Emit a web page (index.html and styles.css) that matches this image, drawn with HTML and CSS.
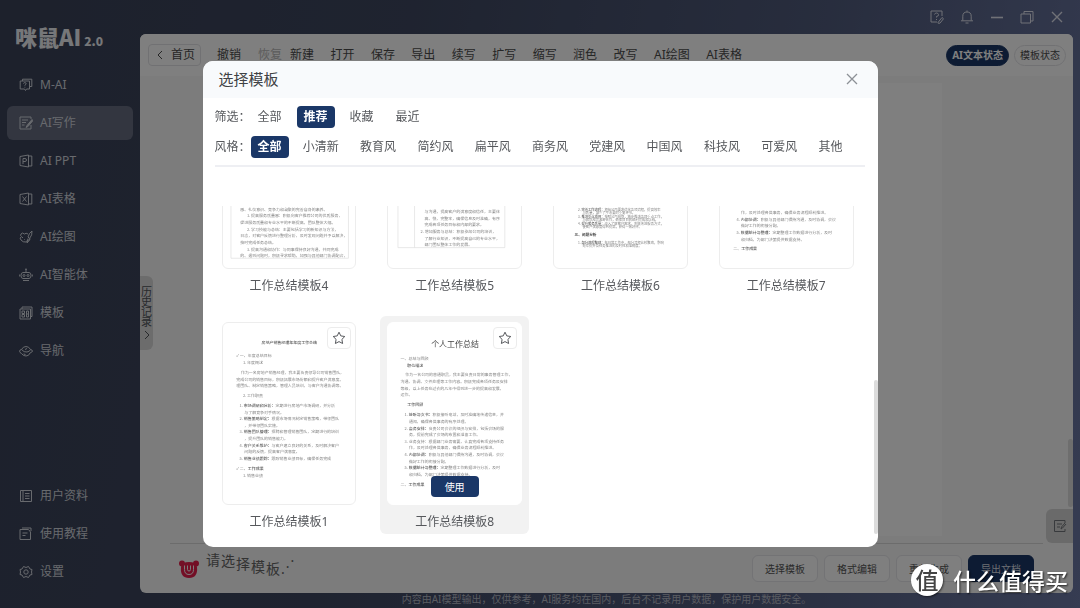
FILE: index.html
```html
<!DOCTYPE html>
<html lang="zh-CN">
<head>
<meta charset="utf-8">
<title>咪鼠AI 2.0</title>
<link rel="stylesheet" href="styles.css">
</head>
<body>
<div class="app">
  <aside class="sidebar">
    <div class="logo">咪鼠AI<span class="logo-version">2.0</span></div>
    <nav class="nav">
      <a class="nav-item" href="#"><svg class="icon" viewBox="0 0 14 14"><path d="M3.5 3V1.2h9.3v7.3H11M1.2 3h9.3v8H7.5L6.500 12.500 5.500 11H1.200zM4.500 5.600q.2-1 1.300-1 1.400 0 1.300 1.100-.2.900-1.200 1.300v.6M5.900 8.800v.8"/></svg>M-AI</a>
      <a class="nav-item active" href="#"><svg class="icon" viewBox="0 0 14 14"><path d="M12 3V1H1v12h11V9M3 4h6M3 6.500h4M3 9h2.500"/><path d="M13 3.500 8 9.500l-1 2 2-1 5-6z" fill="currentColor"/></svg>AI写作</a>
      <a class="nav-item" href="#"><svg class="icon" viewBox="0 0 14 14"><path d="M1 2.500 9.500 1v12L1 11.500zM9.500 2h3.300v10H9.500M4 10V4.500h2q1.500 0 1.500 1.500T6 7.500H4"/></svg>AI PPT</a>
      <a class="nav-item" href="#"><svg class="icon" viewBox="0 0 14 14"><path d="M1 2.500 9.500 1v12L1 11.500zM9.500 2h3.300v10H9.500M3.500 4.500l4 5M7.500 4.500l-4 5"/></svg>AI表格</a>
      <a class="nav-item" href="#"><svg class="icon" viewBox="0 0 14 14"><path d="M9 4Q7 2.500 5.500 4 3 2 2 4t.5 2.500Q0 8 2 10q2 2.500 5 2 1 0 1-1.500 3 0 3-2.500M13 1q.5 4-2.500 7.500L9 7q1-4 4-6zM9 8.500 8 13l3-3.500M3.500 7v1M5.500 9v.6"/></svg>AI绘图</a>
      <a class="nav-item" href="#"><svg class="icon" viewBox="0 0 14 14"><path d="M7 1v3M4 4.500h6q2 0 2 3t-2 3H4q-2 0-2-3t2-3zM.7 6.500v2M13.300 6.500v2M4 12.500h6M6 1.200h2"/><circle cx="5" cy="7.500" r="1"/><circle cx="9" cy="7.500" r="1"/></svg>AI智能体</a>
      <a class="nav-item" href="#"><svg class="icon" viewBox="0 0 14 14"><path d="M3 3V1h10v9.500h-1.500M1 3h10.500v10H1zM3 5h2.500v2.500H3zM3 8.500h2.500V11H3zM7.500 5h2v6h-2zM7.500 8h2"/></svg>模板</a>
      <a class="nav-item" href="#"><svg class="icon" viewBox="0 0 14 14"><path d="M2.500 5.500Q4 2.500 7 2.500t4.500 3q2 .5 2 1.500t-2.500 2Q10 12 7 12T2.500 9.500Q.5 8.500.5 7.200T2.500 5.500q2.500 3 5.500 2.500t3.500-2.500M6 5.500l2-1M4.500 10l2 .5"/></svg>导航</a>
    </nav>
    <nav class="nav nav-bottom">
      <a class="nav-item" href="#"><svg class="icon" viewBox="0 0 14 14"><path d="M1.500 1.500h11v11h-11zM4 1.500v11M6 4.500h4.500M6 7h4.500M6 9.500h4.500"/></svg>用户资料</a>
      <a class="nav-item" href="#"><svg class="icon" viewBox="0 0 14 14"><path d="M1 2.500h8.500L11.500 5v7.500H1zM3 1h9v3M3.500 6h5M3.500 8.500h3"/></svg>使用教程</a>
      <a class="nav-item" href="#"><svg class="icon" viewBox="0 0 14 14"><path d="M4.500 1.500 7 2.500l2.500-1L11 4l2 .5-.5 2.500.5 2.500-2 .5-1.500 2.500-2.500-1-2.500 1L3 10l-2-.5L1.500 7 1 4.500 3 4z"/><circle cx="7" cy="7" r="2.200"/></svg>设置</a>
    </nav>
  </aside>

  <div class="content">
    <header class="titlebar">
      <button class="win-btn" aria-label="反馈"><svg class="icon" viewBox="0 0 14 14"><path d="M12 6V1H1v11h6M4.500 4.500Q5 3 6.500 3T8.500 4.500 6.500 6.500v1M6.500 9v1M8 12.500l4-5 1.500 1.200-3.500 4.500H8z"/></svg></button>
      <button class="win-btn" aria-label="通知"><svg class="icon" viewBox="0 0 14 14"><path d="M7 .5v1.300M2.800 10.500V6.200q0-4.200 4.200-4.200t4.200 4.200v4.300M1 10.800h12M5.500 13h3"/></svg></button>
      <button class="win-btn" aria-label="最小化"><svg class="icon" viewBox="0 0 14 14"><path d="M1 7.500h12" stroke-width="1.600"/></svg></button>
      <button class="win-btn" aria-label="还原"><svg class="icon" viewBox="0 0 14 14"><path d="M4 4V1.500h9V11h-2.500M1 4h9.500v9H1z"/></svg></button>
      <button class="win-btn" aria-label="关闭"><svg class="icon" viewBox="0 0 14 14"><path d="m2 2 10 10M12 2 2 12" stroke-width="1.400"/></svg></button>
    </header>

    <main class="panel">
      <div class="toolbar">
        <button class="home"><svg class="chevron" viewBox="0 0 6 10"><path d="M5 1 1 5l4 4"/></svg>首页</button>
        <div class="history-tools">
          <button class="tool">撤销</button>
          <button class="tool" disabled>恢复</button>
        </div>
        <div class="tools">
          <button class="tool">新建</button><button class="tool">打开</button><button class="tool">保存</button><button class="tool">导出</button><button class="tool">续写</button><button class="tool">扩写</button><button class="tool">缩写</button><button class="tool">润色</button><button class="tool">改写</button><button class="tool">AI绘图</button><button class="tool">AI表格</button>
        </div>
        <div class="modes">
          <button class="mode selected">AI文本状态</button>
          <button class="mode">模板状态</button>
        </div>
      </div>
      <div class="editor">
        <div class="page"></div>
        <button class="history-tab"><span>历史记录</span><svg class="chevron" viewBox="0 0 6 10"><path d="m1 1 4 4-4 4"/></svg></button>
        <div class="editor-scroll"></div>
        <button class="note-tab" aria-label="笔记"><svg class="icon" viewBox="0 0 14 14"><path d="M12 4V1.500H1.500v11H12V10M4 5h5M4 8h3M13 5 9.500 9 8 10l.5-2L12 4"/></svg></button>
      </div>
      <div class="actionbar">
        <svg class="mascot" viewBox="0 0 20 18"><circle cx="3" cy="3.500" r="3"/><circle cx="17" cy="3.500" r="3"/><path d="M2 7q1-5 8-5t8 5q1 11-8 11T2 7z"/><path class="mascot-line" d="M5.500 5.500v4q0 5 4.500 5t4.500-5v-4M8.500 5.500V9.500q0 1.500 1.500 1.500t1.500-1.500V5.500"/></svg>
        <div class="wave"><span>请</span><span>选</span><span>择</span><span>模</span><span>板</span><i>.</i><i>.</i><i>.</i></div>
        <div class="actions">
          <button class="action">选择模板</button>
          <button class="action">格式编辑</button>
          <button class="action">重新生成</button>
          <button class="action primary">导出文档</button>
        </div>
      </div>
    </main>
    <footer class="disclaimer">内容由AI模型输出，仅供参考，AI服务均在国内，后台不记录用户数据，保护用户数据安全。</footer>
  </div>
</div>

<div class="overlay">
  <section class="modal" role="dialog" aria-modal="true" aria-labelledby="modal-title">
    <header class="modal-head">
      <h2 id="modal-title">选择模板</h2>
      <button class="close" aria-label="关闭"><svg class="icon" viewBox="0 0 14 14"><path d="m2 2 10 10M12 2 2 12" stroke-width="1.300"/></svg></button>
    </header>
    <div class="modal-body">
      <div class="filters">
        <div class="filter-row"><span class="filter-label">筛选：</span>
          <div class="chips"><button class="chip">全部</button><button class="chip selected">推荐</button><button class="chip">收藏</button><button class="chip">最近</button></div>
        </div>
        <div class="filter-row"><span class="filter-label">风格：</span>
          <div class="chips spread"><button class="chip selected">全部</button><button class="chip">小清新</button><button class="chip">教育风</button><button class="chip">简约风</button><button class="chip">扁平风</button><button class="chip">商务风</button><button class="chip">党建风</button><button class="chip">中国风</button><button class="chip">科技风</button><button class="chip">可爱风</button><button class="chip">其他</button></div>
        </div>
      </div>
      <div class="viewport">
        <div class="grid">
          <article class="item"><div class="card">
            <svg class="doc" viewBox="0 0 400 546">
              <path class="frame" d="M24 20V516H378V20"/>
              <g>
                <text x="52" y="373">感、礼仪意识、竞争力和凝聚的完善自身的素养。</text>
                <text x="72" y="393">1. 提高服务质量感：积极向客户推荐公司的优质服务，</text>
                <text x="52" y="413">促进服务质量和专业水平的不断提高，团队整体大幅。</text>
                <text x="72" y="433">2. 学习技能与总结：主要包括学习的新知识与方法，</text>
                <text x="52" y="453">日志，对客户反馈进行整理分析，及时发现问题并予以解决，</text>
                <text x="52" y="473">按时完成任务总结。</text>
                <text x="72" y="493">3. 提高沟通和协作：与同事保持良好沟通，共同完成</text>
                <text x="52" y="511">的、遇到问题时，积极寻求帮助，加强与其他部门协调配合，</text>
              </g>
            </svg></div><h3>工作总结模板4</h3></article>
          <article class="item"><div class="card">
            <svg class="doc" viewBox="0 0 400 546">
              <path class="frame" d="M30 20V484H352V20M80 20V484"/>
              <g>
                <text x="110" y="380">与沟通，提高客户的满意度和信任，主要体</text>
                <text x="110" y="400">高、快、完整率，确保信息及时准确，有序</text>
                <text x="110" y="420">完成各项任务目标和内部的要求。</text>
                <text x="98" y="440">2. 增加服务与总结：积极参加公司的培训，</text>
                <text x="110" y="460">了解行业知识，不断提高自己的专业水平，</text>
                <text x="110" y="480">部门团队整体工作的发展。</text>
              </g>
            </svg></div><h3>工作总结模板5</h3></article>
          <article class="item"><div class="card">
            <svg class="doc small" viewBox="0 0 400 546">
              <g>
                <text x="72" y="374">2. <tspan class="b">完善工作流程：</tspan>根据公司要求优化各项流程，提高效率</text>
                <text x="86" y="384">与质量，减少了不必要的重复环节。</text>
                <text x="72" y="394">3. <tspan class="b">推进重点项目：</tspan>按照公司规划，稳步推进各项重点工作，</text>
                <text x="86" y="404">与团队成员紧密合作，确保项目的顺利完成和上线。</text>
                <text x="72" y="415">4. <tspan class="b">提升服务质量：</tspan>深入了解客户需求，积极改进服务方式，</text>
                <text x="86" y="425">使客户满意度得到提高，获得一致好评。</text>
                <text class="head" x="62" y="449">三、问题分析</text>
                <text x="72" y="472">1. <tspan class="b">部分流程繁琐：</tspan>在日常工作中，部分流程比较繁琐，影响</text>
                <text x="86" y="482">效率提升及任务推进的及时性和准确度。</text>
              </g>
            </svg></div><h3>工作总结模板6</h3></article>
          <article class="item"><div class="card">
            <svg class="doc" viewBox="0 0 400 546">
              <g>
                <text x="63" y="383">作，及时处理各类事务，确保业务流程顺利推进。</text>
                <text x="50" y="403">4. <tspan class="b">内部协调：</tspan>积极与其他部门保持沟通，及时协调，会议</text>
                <text x="63" y="423">做好工作的衔接分配。</text>
                <text x="50" y="443">5. <tspan class="b">数据统计与整理：</tspan>定期整理工作数据进行分析，及时</text>
                <text x="63" y="463">和归档，为部门决策提供数据支持。</text>
                <text x="40" y="492">二、<tspan class="b">工作成果</tspan></text>
              </g>
            </svg></div><h3>工作总结模板7</h3></article>
          <article class="item"><div class="card">
            <svg class="doc" viewBox="0 0 400 546">
              <g>
                <text class="b" x="116" y="64">房地产销售经理年年度工作总结</text>
                <text x="40" y="104">✓ 一、年度总结目标</text>
                <text x="60" y="124">1. 年度概述</text>
                <text x="54" y="154">作为一名房地产销售经理，我主要负责领导公司销售团队，</text>
                <text x="40" y="174">完成公司的销售目标，积极拓展市场份额和提升客户满意度。</text>
                <text x="40" y="194">理团队、制定销售策略，管理人员培训，与客户沟通协调等。</text>
                <text x="60" y="224">2. 工作职责</text>
                <text x="50" y="253">1. <tspan class="b">市场调研和分析：</tspan>定期进行房地产市场调研，并分析</text>
                <text x="64" y="273">与了解竞争对手情况。</text>
                <text x="50" y="293">2. <tspan class="b">销售策略制定：</tspan>根据市场情况制定销售策略，带领团队</text>
                <text x="64" y="313">，并带领团队实施。</text>
                <text x="50" y="333">3. <tspan class="b">销售团队管理：</tspan>招聘和管理销售团队，定期进行的培训</text>
                <text x="64" y="353">，提升团队的销售能力。</text>
                <text x="50" y="373">4. <tspan class="b">客户关系维护：</tspan>与客户建立良好的关系，及时解决客户</text>
                <text x="64" y="393">问题的反馈，提高客户满意度。</text>
                <text x="50" y="413">5. <tspan class="b">销售业绩跟踪：</tspan>跟踪销售业绩目标，确保任务完成</text>
                <text x="40" y="443">✓ 二、<tspan class="b">工作成果</tspan></text>
                <text x="60" y="463">1. 销售业绩</text>
              </g>
            </svg>
            <button class="star" aria-label="收藏"><svg class="icon" viewBox="0 0 14 14"><path d="m7 1.200 1.800 3.700 4 .6-2.900 2.900.7 4.100L7 10.600l-3.600 1.900.7-4.100L1.200 5.500l4-.6z"/></svg></button></div><h3>工作总结模板1</h3></article>
          <article class="item hover"><div class="card">
            <svg class="doc" viewBox="0 0 400 546">
              <g>
                <text class="title" x="130" y="71">个人工作总结</text>
                <text x="38" y="112">一、总结与回顾</text>
                <text class="b" x="58" y="132">职位描述</text>
                <text x="52" y="161">作为一名公司的普通职员，我主要负责日常的事务管理工作，</text>
                <text x="38" y="181">沟通、协调、文件处理等工作内容。积极完成各项任务及安排</text>
                <text x="38" y="201">等级，以上任务在过去的几年中得到进一步的提高和发展，</text>
                <text x="38" y="221">运作。</text>
                <text class="b" x="58" y="250">工作回顾</text>
                <text x="50" y="280">1. <tspan class="b">接听与文书：</tspan>积极接听电话，及时准确地传递信息，并</text>
                <text x="63" y="300">通知，确保各类事务的有序处理。</text>
                <text x="50" y="321">2. <tspan class="b">会务安排：</tspan>负责公司会议的组织与安排，包括会场的服</text>
                <text x="63" y="341">务，提前完成了会场的布置和准备工作。</text>
                <text x="50" y="361">3. 业务支持：根据部门业务需要，认真完成各项支持任务</text>
                <text x="63" y="381">作，及时处理各类事务，确保业务流程顺利推进。</text>
                <text x="50" y="401">4. <tspan class="b">内部协调：</tspan>积极与其他部门保持沟通，及时协调，会议</text>
                <text x="63" y="421">做好工作的衔接分配。</text>
                <text x="50" y="441">5. <tspan class="b">数据统计与整理：</tspan>定期整理工作数据进行分析，及时</text>
                <text x="63" y="461">和归档，为部门决策提供数据支持。</text>
                <text x="38" y="490">二、<tspan class="b">工作成果</tspan></text>
              </g>
            </svg>
            <button class="star" aria-label="收藏"><svg class="icon" viewBox="0 0 14 14"><path d="m7 1.200 1.800 3.700 4 .6-2.900 2.900.7 4.100L7 10.600l-3.600 1.900.7-4.100L1.200 5.500l4-.6z"/></svg></button>
            <button class="use">使用</button></div><h3>工作总结模板8</h3></article>
        </div>
        <div class="thumb"></div>
      </div>
    </div>
  </section>
</div>

<div class="watermark"><span class="watermark-badge">值</span><span>什么值得买</span></div>
</body>
</html>
```

FILE: styles.css
```css
* { box-sizing: border-box; }

body {
  margin: 0;
  font-family: "Noto Sans", "Noto Sans CJK SC", sans-serif;
  font-size: 12px;
  line-height: 16px;
  overflow: hidden;
}

button {
  font: inherit;
  color: inherit;
  background: none;
  border: 0;
  padding: 0;
  white-space: nowrap;
}

.icon, .chevron {
  width: 14px;
  height: 14px;
  flex: none;
  display: block;
  fill: none;
  stroke: currentColor;
}
.chevron { width: 6px; height: 10px; }

.app {
  display: flex;
  height: 100vh;
  background: linear-gradient(100deg, #3a4258 0%, #3e4760 35%, #505b7c 70%, #6c78a4 100%);
}

/* Sidebar */
.sidebar {
  width: 140px;
  flex: none;
  display: flex;
  flex-direction: column;
  padding: 22px 7px 19px;
}
.logo {
  padding-left: 8px;
  font-family: "Noto Sans CJK SC", sans-serif;
  font-size: 22px;
  line-height: 28px;
  font-weight: 900;
  color: #eceef2;
  white-space: nowrap;
}
.logo-version { font-size: 12px; padding-left: 3px; }
.nav {
  display: flex;
  flex-direction: column;
  gap: 4px;
  padding-top: 13px;
}
.nav-bottom { margin-top: auto; }
.nav-item {
  display: flex;
  align-items: center;
  gap: 7px;
  height: 34px;
  padding-left: 12px;
  border-radius: 6px;
  color: #d0d4dc;
  text-decoration: none;
}
.nav-item.active { background: #666c80; }

/* Content column */
.content {
  flex: 1;
  min-width: 0;
  display: flex;
  flex-direction: column;
  padding-right: 7px;
}
.titlebar {
  height: 34px;
  display: flex;
  justify-content: flex-end;
  align-items: center;
  gap: 16px;
  padding-right: 9px;
  color: #e0e3ee;
}
.panel {
  flex: 1;
  min-height: 0;
  display: flex;
  flex-direction: column;
  background: #f8f8f8;
  border-radius: 6px;
  overflow: hidden;
}
.toolbar {
  height: 42px;
  display: flex;
  align-items: center;
  padding: 0 7px 0 8px;
  background: #fff;
  color: #4c4c4c;
}
.home {
  display: flex;
  align-items: center;
  gap: 8px;
  height: 22px;
  padding: 0 5px 0 8px;
  border: 1px solid #e2e2e6;
  border-radius: 4px;
}
.history-tools { display: flex; gap: 17px; margin: 0 8px 0 16px; }
.tool:disabled { color: #b8b8b8; }
.tools { flex: 0 1 452px; display: flex; justify-content: space-between; }
.modes { margin-left: auto; display: flex; gap: 5px; }
.mode {
  height: 21px;
  padding: 0 5px;
  border: 1px solid #e2e2e6;
  border-radius: 11px;
  font-size: 10px;
}
.mode.selected {
  background: #1a3666;
  border-color: #1a3666;
  color: #fff;
  font-weight: 700;
}

.editor {
  flex: 1;
  position: relative;
  display: flex;
  justify-content: center;
  padding: 7px 0;
}
.page { width: 72%; background: #fff; }
.history-tab {
  position: absolute;
  left: 0;
  top: 200px;
  width: 13px;
  height: 74px;
  display: flex;
  flex-direction: column;
  align-items: center;
  justify-content: center;
  gap: 3px;
  background: #d8d8d8;
  border-radius: 0 6px 6px 0;
  color: #505458;
  font-size: 11px;
  line-height: 10px;
  white-space: normal;
}
.history-tab span { width: 11px; }
.note-tab {
  position: absolute;
  right: 0;
  bottom: 0;
  width: 27px;
  height: 34px;
  display: grid;
  place-items: center;
  background: #d4d4d4;
  border-radius: 6px 0 0 6px;
  color: #70747a;
}
.editor-scroll {
  position: absolute;
  right: 0;
  bottom: 36px;
  width: 5px;
  height: 68px;
  background: #dcdcdc;
  border-radius: 3px;
}

.actionbar {
  display: flex;
  align-items: center;
  height: 50px;
  margin: 0 30px;
  padding: 0 9px;
  border-top: 1px solid #d8d8d8;
}
.mascot { width: 20px; height: 18px; fill: #e61e4d; }
.mascot-line { fill: none; stroke: #f8f8f8; stroke-width: 1; }
.wave {
  display: flex;
  gap: 1px;
  padding-left: 7px;
  font-size: 14px;
  color: #666;
}
.wave span:nth-child(1) { transform: translateY(-9px); }
.wave span:nth-child(2) { transform: translateY(-8px); }
.wave span:nth-child(3) { transform: translateY(-5px); }
.wave span:nth-child(4) { transform: translateY(-2px); }
.wave i { font-style: normal; }
.wave i:nth-child(7) { transform: translateY(-6px); }
.wave i:nth-child(8) { transform: translateY(-12px); }
.actions { margin-left: auto; display: flex; gap: 6px; }
.action {
  width: 66px;
  height: 27px;
  background: #fff;
  border: 1px solid #e6e6ea;
  border-radius: 6px;
  font-size: 10px;
  color: #555;
}
.action.primary { background: #1a3666; border-color: #1a3666; color: #d8dce4; }
.disclaimer {
  height: 15px;
  line-height: 12px;
  font-size: 10px;
  text-align: center;
  color: #b4b8c4;
}

/* Template dialog */
.overlay {
  position: fixed;
  inset: 0;
  display: grid;
  place-items: center;
  background: rgba(0, 0, 0, .5);
}
.modal {
  width: 62.5%;
  height: 80%;
  display: flex;
  flex-direction: column;
  background: #fff;
  border-radius: 10px;
  overflow: hidden;
  color: #56585c;
}
.modal-head {
  display: flex;
  align-items: center;
  justify-content: space-between;
  height: 37px;
  flex: none;
  padding: 0 19px 0 16px;
  background: #f8fafc;
}
.modal-head h2 { margin: 0; font-size: 15px; font-weight: 400; color: #404245; }
.close { color: #8c9096; }
.modal-body {
  flex: 1;
  min-height: 0;
  display: flex;
  flex-direction: column;
  padding: 8px 0 13px 12px;
}
.filters {
  display: flex;
  flex-direction: column;
  gap: 8px;
  margin-right: 13px;
  padding-bottom: 7px;
  border-bottom: 2px solid #eeeff3;
}
.filter-row { display: flex; align-items: center; }
.filter-label { width: 36px; flex: none; white-space: nowrap; }
.chips { display: flex; gap: 8px; }
.chips.spread { flex: 1; gap: 0; justify-content: space-between; padding-right: 15px; }
.chip { height: 22px; padding: 0 7px; border-radius: 4px; }
.chip.selected { background: #1a3767; color: #fff; font-weight: 700; }

.viewport {
  flex: 1;
  min-height: 0;
  display: flex;
  flex-direction: column;
  justify-content: flex-end;
  position: relative;
  margin-top: 39px;
  overflow: hidden;
}
.grid {
  display: grid;
  grid-template-columns: repeat(4, 1fr);
  gap: 18px 17px;
  margin-right: 17px;
}
.item { padding: 6px 7px 4px; border-radius: 6px; }
.item.hover { background: #f2f2f2; }
.item h3 {
  margin: 9px 0 0;
  font-size: 12px;
  line-height: 16px;
  font-weight: 400;
  text-align: center;
}
.card {
  position: relative;
  background: #fff;
  border: 1px solid #ededed;
  border-radius: 6px;
}
.item.hover .card { border-color: #fff; }
.doc {
  display: block;
  width: 100%;
  font-family: "Noto Sans CJK SC", sans-serif;
  font-size: 12px;
  fill: #858585;
}
.doc.small { font-size: 10px; }
.doc .b { font-weight: 500; fill: #606060; }
.doc .head { font-size: 11px; font-weight: 700; fill: #444; }
.doc .title { font-size: 24px; fill: #444; }
.doc .frame { fill: none; stroke: #ddd; stroke-width: 2; }
.star {
  position: absolute;
  top: 4px;
  right: 4px;
  width: 24px;
  height: 22px;
  display: grid;
  place-items: center;
  background: #fff;
  border: 1px solid #ececec;
  border-radius: 4px;
}
.use {
  position: absolute;
  bottom: 7px;
  left: 50%;
  width: 48px;
  height: 21px;
  margin-left: -24px;
  background: #1a3767;
  border-radius: 4px;
  color: #fff;
  font-size: 10px;
}
.thumb {
  position: absolute;
  right: 0;
  bottom: 0;
  width: 4px;
  height: 154px;
  background: #dcdcdc;
  border-radius: 2px;
}

.watermark {
  position: fixed;
  right: 12px;
  bottom: 12px;
  display: flex;
  align-items: center;
  gap: 10px;
  font-family: "Noto Sans CJK SC", sans-serif;
  font-size: 23px;
  line-height: 30px;
  font-weight: 500;
  color: #fff;
  text-shadow: 1px 1px 2px rgba(0, 0, 0, .7);
}
.watermark-badge {
  width: 32px;
  height: 32px;
  border-radius: 50%;
  background: #fff;
  color: #444;
  text-align: center;
  text-shadow: none;
  box-shadow: 1px 1px 2px rgba(0, 0, 0, .5);
}
```
